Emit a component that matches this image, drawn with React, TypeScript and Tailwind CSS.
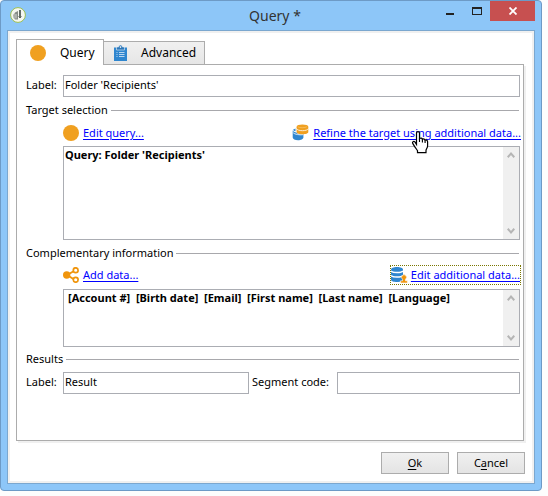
import { ReactNode } from "react";

const FIELD =
  "h-[22px] w-full min-w-0 border border-[#abadb3] bg-white px-px pb-[3px] text-[11px] text-black outline-none";

function SectionTitle({ children }: { children: ReactNode }) {
  return (
    <h2 className="flex h-4 items-center gap-[3px] whitespace-nowrap">
      {children}
      <span className="mr-px h-px flex-1 bg-[#a8a8ac]" />
    </h2>
  );
}

function Chevron({ down }: { down?: boolean }) {
  return (
    <svg width="8" height="6" viewBox="0 0 8 6" fill="none" stroke="#b5b5b5" strokeWidth="2">
      <path d={down ? "M.7 .8 4 4.4 7.3 .8" : "M.7 5.2 4 1.6 7.3 5.2"} />
    </svg>
  );
}

function TextBox({ label, value, height, indent }: { label: string; value: string; height: string; indent: string }) {
  return (
    <div className={`flex border border-[#abadb3] bg-white ${height}`}>
      <textarea
        aria-label={label}
        readOnly
        value={value}
        className={`min-w-0 flex-1 resize-none overflow-hidden text-[11px] leading-4 font-bold text-black outline-none ${indent}`}
      />
      <div className="flex w-4 flex-col items-center justify-between bg-[#f0f0f0]">
        <button type="button" aria-label="Scroll up" className="flex h-4 w-4 items-center justify-center">
          <Chevron />
        </button>
        <button type="button" aria-label="Scroll down" className="flex h-4 w-4 items-center justify-center">
          <Chevron down />
        </button>
      </div>
    </div>
  );
}

function Dot() {
  return (
    <svg width="16" height="16" viewBox="0 0 16 16">
      <circle cx="8" cy="8" r="8" fill="#f0a020" />
    </svg>
  );
}

function AppIcon() {
  return (
    <svg width="16" height="16" viewBox="0 0 16 16">
      <circle cx="8" cy="8" r="7.4" fill="#f5f7f1" stroke="#9bbf50" />
      <path d="M3 8 5 5.500v7L3.500 11z" fill="#a9ada9" />
      <path d="M5 5.500 8 4v8.500H5z" fill="#858b86" />
      <path d="M6 7v4.500" stroke="#d6dad6" />
      <path d="M10 3v7" fill="none" stroke="#26302a" strokeWidth="1.400" />
      <path d="M8.500 9.500 10 11l1.500-1.500" fill="none" stroke="#59615b" />
    </svg>
  );
}

function ClipboardIcon() {
  return (
    <svg width="13" height="16" viewBox="0 0 13 16">
      <path d="M0 2.5h13V16H0z" fill="#2f86cf" />
      <path d="M2.5 2h2a2 2 0 0 1 4 0h2v3h-8z" fill="#2f78b8" stroke="#e8f0f8" strokeWidth=".6" />
      <circle cx="6.5" cy="2.1" r=".8" fill="#fff" />
      <path d="M2.5 7.500h1M5 7.500h5.500M2.500 9.500h1M5 9.500h5.500M2.500 11.500h1M5 11.500h5.500" stroke="#b9d6ef" />
    </svg>
  );
}

function RefineIcon() {
  return (
    <svg width="17" height="17" viewBox="0 0 17 17">
      <path d="M.7 6.200v7.300c0 1.600 2.400 2.800 5.300 2.800s5.400-1.200 5.400-2.800v-3.200c-2.800.6-6.200.1-6.900-1.700C2.700 8.300 1.200 7.500.7 6.200z" fill="#2f86cf" />
      <path d="M1 5.800 3.500 4.600v2.700C2.300 7.100 1.300 6.600 1 5.800z" fill="#2f86cf" />
      <path d="M1.200 8.800c1.300 1.600 6.800 2.400 9.800 1.900" fill="none" stroke="#fff" strokeWidth=".8" />
      <path d="M4.600 3v5c0 1.300 2.600 2.300 5.800 2.300s5.900-1 5.900-2.300V3z" fill="#f0a020" />
      <ellipse cx="10.450" cy="2.700" rx="5.850" ry="2.300" fill="#f0a020" />
      <path d="M4.600 4.600c.4 1.300 2.800 2.100 5.800 2.100s5.500-.8 5.900-2.100" fill="none" stroke="#fff" strokeWidth=".8" />
      <path d="M5.800 2.800c1.500 1.200 7.500 1.200 9 0" fill="none" stroke="#fbd38a" strokeWidth=".5" />
    </svg>
  );
}

function ShareIcon() {
  return (
    <svg width="16" height="16" viewBox="0 0 16 16" fill="none" stroke="#f0950c">
      <path d="M4 8 12 3.500M4 8l8 5" strokeWidth="2" />
      <circle cx="3.700" cy="8" r="3.700" fill="#f0950c" stroke="none" />
      <circle cx="12.700" cy="3.200" r="2.400" fill="#fff" strokeWidth="1.700" />
      <circle cx="12.700" cy="12.800" r="2.400" fill="#fff" strokeWidth="1.700" />
    </svg>
  );
}

function DatabaseUserIcon() {
  return (
    <svg width="17" height="16" viewBox="0 0 17 16">
      <path d="M0 2.500C0 1.100 2.700 0 6 0s6 1.100 6 2.500v10.200C12 14 9.300 15 6 15s-6-1-6-2.300z" fill="#2f86cf" />
      <path d="M0 4c1.500 2 10.500 2 12 0M0 8.500c1.500 2 10.500 2 12 0" fill="none" stroke="#fff" strokeWidth="1.400" />
      <path d="M9.500 16v-2.200h2v-1.500a2.500 2.500 0 1 1 3 0v1.500h2V16z" fill="#f0950c" stroke="#fff" strokeWidth=".6" />
    </svg>
  );
}

function HandPointer() {
  return (
    <svg className="pointer-events-none absolute top-[6px] left-[98px] z-10" width="18" height="23" viewBox="0 0 18 23">
      <path
        d="M5.500 13.500V2.200C5.500.1 8.500.1 8.500 2.200v5.500c1-1 2.700-.6 2.900.7.900-.8 2.500-.4 2.700.8 1.100-.6 2.500.1 2.500 1.500v4.100c0 2-1.300 3-1.600 4.600v2.200H6.500v-2c-1.200-1.700-3-4-4.800-7.200-.8-1.600 1-2.600 2.200-1.500z"
        fill="#fff"
        stroke="#000"
        strokeWidth="1.200"
      />
      <path d="M8.500 7v4M11.400 8.200v3.300M14.100 9.200v2.800" stroke="#000" strokeWidth="1.100" />
    </svg>
  );
}

const LINK = "text-[#0000ff] underline underline-offset-2";

export default function App() {
  return (
    <div className="bg-[#fdfdfd] pr-[6px] pb-[5px] font-['Noto_Sans','Open_Sans',sans-serif] text-[11px] leading-4 text-black">
      <main className="rounded-[4px] border border-[#6d9ac6] bg-[#8dc6f8] px-[6px] pb-[6px]">
        <header className="relative flex h-[29px] items-start justify-between">
          <div className="pt-[6px] pl-[3px]">
            <AppIcon />
          </div>
          <h1 className="absolute inset-x-0 top-0 pt-[5px] pl-2 text-center text-[14px] leading-5 text-[#333]">Query *</h1>
          <div className="relative flex">
            <button type="button" aria-label="Minimize" className="flex h-5 w-[27px] items-center justify-center">
              <span className="mt-[5px] h-[2px] w-2 bg-[#222]" />
            </button>
            <button type="button" aria-label="Maximize" className="flex h-5 w-[27px] items-center justify-center">
              <span className="h-2 w-[10px] border border-t-2 border-[#222]" />
            </button>
            <button type="button" aria-label="Close" className="flex h-5 w-[45px] items-center justify-center bg-[#c75050]">
              <svg width="8" height="8" viewBox="0 0 8 8" stroke="#fff" strokeWidth="1.800">
                <path d="m.5.500 7 7m0-7-7 7" />
              </svg>
            </button>
          </div>
        </header>

        <div className="border border-[#7ba7cf]">
          <div className="border-2 border-[#f0f0f0] bg-white pt-[6px] pr-[7px] pb-[7px] pl-[6px]">
            <div role="tablist" className="relative flex items-end text-[12px]">
              <button
                type="button"
                role="tab"
                aria-selected="true"
                className="relative -mb-px flex h-[26px] w-[88px] items-center gap-[14px] border border-b-0 border-[#acacac] bg-white pl-[13px]"
              >
                <Dot />
                Query
              </button>
              <button
                type="button"
                role="tab"
                aria-selected="false"
                className="flex h-[23px] w-[101px] items-center gap-[14px] border border-b-0 border-l-0 border-[#acacac] bg-linear-to-b from-[#f0f0f0] to-[#e6e6e6] pl-[10px]"
              >
                <ClipboardIcon />
                Advanced
              </button>
            </div>

            <section className="mr-px border border-[#acacac] pt-[10px] pr-[3px] pb-[46px] pl-[9px] shadow-[2px_2px_0_#f0f0f0]">
              <div className="flex items-center">
                <label htmlFor="label" className="w-[37px] pb-[2px]">Label:</label>
                <div className="flex-1">
                  <input id="label" className={FIELD} defaultValue="Folder 'Recipients'" />
                </div>
              </div>

              <div className="pt-[5px]">
                <SectionTitle>Target selection</SectionTitle>
              </div>
              <div className="flex h-7 items-center justify-between pt-px pl-[37px]">
                <a href="#edit-query" className="flex items-center gap-1">
                  <Dot />
                  <span className={LINK}>Edit query...</span>
                </a>
                <a href="#refine" className="relative -mr-px flex items-center gap-1">
                  <RefineIcon />
                  <span className={`relative ${LINK}`}>
                    Refine the target using additional data...
                    <HandPointer />
                  </span>
                </a>
              </div>
              <div className="pl-[37px]">
                <TextBox label="Target query" value="Query: Folder 'Recipients'" height="h-[94px]" indent="px-px" />
              </div>

              <div className="pt-[5px]">
                <SectionTitle>Complementary information</SectionTitle>
              </div>
              <div className="flex h-7 items-center justify-between pl-[37px]">
                <a href="#add-data" className="flex items-center gap-1">
                  <ShareIcon />
                  <span className={LINK}>Add data...</span>
                </a>
                <a href="#edit-data" className="-mr-px flex h-5 items-center gap-[3px] border border-dotted border-[#7a7600] bg-white">
                  <DatabaseUserIcon />
                  <span className={LINK}>Edit additional data...</span>
                </a>
              </div>
              <div className="pl-[37px]">
                <TextBox
                  label="Additional data"
                  value="[Account #]  [Birth date]  [Email]  [First name]  [Last name]  [Language]"
                  height="h-[58px]"
                  indent="px-1"
                />
              </div>

              <div className="pt-[4px] pb-[5px]">
                <SectionTitle>Results</SectionTitle>
              </div>
              <div className="grid grid-cols-[37px_186fr_88px_183fr] items-center">
                <label htmlFor="result" className="pb-[2px]">Label:</label>
                <input id="result" className={FIELD} defaultValue="Result" />
                <label htmlFor="segment" className="pb-[2px] pl-[3px] whitespace-nowrap">Segment code:</label>
                <input id="segment" className={FIELD} />
              </div>
            </section>

            <div className="flex justify-end gap-2 pt-[11px]">
              <button type="button" className="h-[22px] w-[68px] border border-[#acacac] bg-linear-to-b from-[#f0f0f0] to-[#e4e4e4] leading-4">
                <u className="underline-offset-2">O</u>k
              </button>
              <button type="button" className="h-[22px] w-[68px] border border-[#acacac] bg-linear-to-b from-[#f0f0f0] to-[#e4e4e4] leading-4">
                C<u className="underline-offset-2">a</u>ncel
              </button>
            </div>
          </div>
        </div>
      </main>
    </div>
  );
}
